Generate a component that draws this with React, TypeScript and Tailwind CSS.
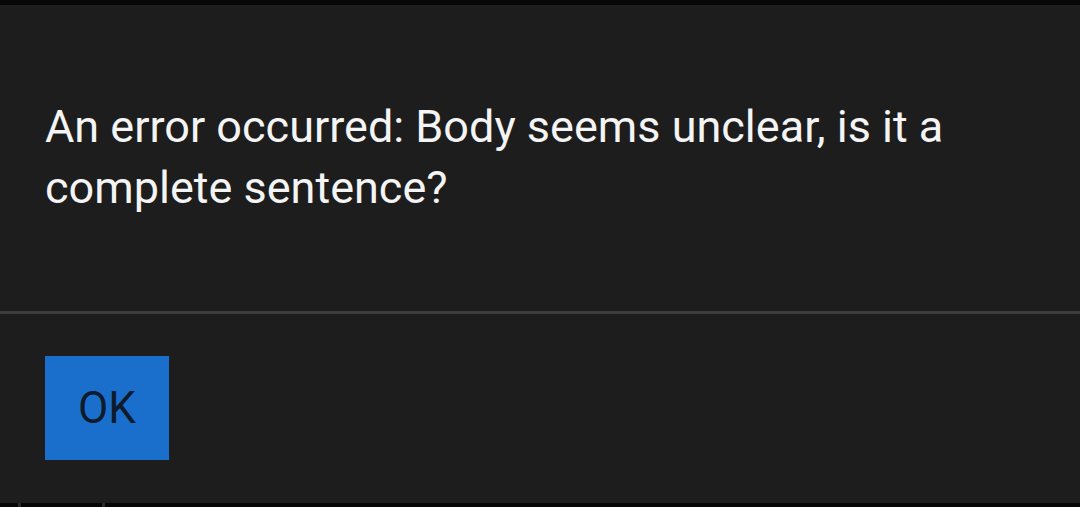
import React from 'react';

const App: React.FC = () => {
  return (
    <div className="w-[1080px] h-[507px] flex flex-col bg-black overflow-hidden" style={{ fontFamily: 'Roboto, "Noto Sans", sans-serif' }}>
      <div className="h-[5px] bg-[#080808]" />
      <div className="flex-1 flex flex-col bg-[#1d1d1d]">
        <p className="pt-[91px] px-[45px] text-[45px] leading-[61px] text-[#f4f4f4]">
          An error occurred: Body seems unclear, is it a complete sentence?
        </p>
        <div className="mt-[93px] h-[3px] bg-[#3d3d3d]" />
        <div className="pt-[42px] px-[45px]">
          <button className="w-[124px] h-[104px] bg-[#1b6fcc] text-[44px] text-[#0e1b2b] flex items-center justify-center">
            OK
          </button>
        </div>
      </div>
      <div className="h-[4px] bg-[#050505] flex">
        <div className="ml-[18px] w-[3px] bg-[#2a2a2a]" />
        <div className="ml-[81px] w-[3px] bg-[#2a2a2a]" />
      </div>
    </div>
  );
};

export default App;
